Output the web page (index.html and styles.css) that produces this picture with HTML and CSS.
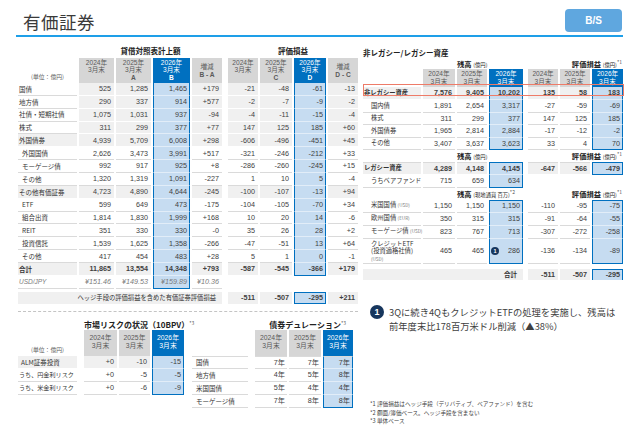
FILE: index.html
```html
<!DOCTYPE html>
<html lang="ja">
<head>
<meta charset="utf-8">
<title>有価証券</title>
<link rel="stylesheet" href="styles.css">
</head>
<body>
<div class="header">
  <div class="title">有価証券</div>
  <div class="badge">B/S</div>
</div>
<div class="body">
  <div class="left">
    <table class="tbl main">
      <colgroup>
        <col style="width:59px"><col style="width:35px"><col style="width:35px"><col style="width:37px"><col style="width:30px">
        <col style="width:2px">
        <col style="width:30px"><col style="width:32px"><col style="width:32px"><col style="width:30px">
      </colgroup>
      <tr class="ttl"><th></th><th colspan="4">貸借対照表計上額</th><th></th><th colspan="4">評価損益</th></tr>
      <tr class="hd">
        <th class="unit">(単位：億円)</th>
        <th class="g">2024年<br>3月末</th>
        <th class="g">2025年<br>3月末<br><b>A</b></th>
        <th class="b">2026年<br>3月末<br><b>B</b></th>
        <th class="g mid">増減<br><b>B - A</b></th>
        <th></th>
        <th class="g">2024年<br>3月末</th>
        <th class="g">2025年<br>3月末<br><b>C</b></th>
        <th class="b">2026年<br>3月末<br><b>D</b></th>
        <th class="g mid">増減<br><b>D - C</b></th>
      </tr>
      <tr class="r sh"><td class="lb">国債</td><td>525</td><td>1,285</td><td class="hl">1,465</td><td>+179</td><td class="sp"></td><td>-21</td><td>-48</td><td class="hl">-61</td><td>-13</td></tr>
      <tr class="r sh"><td class="lb">地方債</td><td>290</td><td>337</td><td class="hl">914</td><td>+577</td><td class="sp"></td><td>-2</td><td>-7</td><td class="hl">-9</td><td>-2</td></tr>
      <tr class="r sh"><td class="lb">社債・短期社債</td><td>1,075</td><td>1,031</td><td class="hl">937</td><td>-94</td><td class="sp"></td><td>-4</td><td>-11</td><td class="hl">-15</td><td>-4</td></tr>
      <tr class="r sh"><td class="lb">株式</td><td>311</td><td>299</td><td class="hl">377</td><td>+77</td><td class="sp"></td><td>147</td><td>125</td><td class="hl">185</td><td>+60</td></tr>
      <tr class="r sh"><td class="lb shl">外国債券</td><td>4,939</td><td>5,709</td><td class="hl">6,008</td><td>+298</td><td class="sp"></td><td>-606</td><td>-496</td><td class="hl">-451</td><td>+45</td></tr>
      <tr class="r"><td class="lb sub">外国国債</td><td>2,626</td><td>3,473</td><td class="hl">3,991</td><td>+517</td><td class="sp"></td><td>-321</td><td>-246</td><td class="hl">-212</td><td>+33</td></tr>
      <tr class="r"><td class="lb sub">モーゲージ債</td><td>992</td><td>917</td><td class="hl">925</td><td>+8</td><td class="sp"></td><td>-286</td><td>-260</td><td class="hl">-245</td><td>+15</td></tr>
      <tr class="r"><td class="lb sub">その他</td><td>1,320</td><td>1,319</td><td class="hl">1,091</td><td>-227</td><td class="sp"></td><td>1</td><td>10</td><td class="hl">5</td><td>-4</td></tr>
      <tr class="r sh"><td class="lb shl">その他有価証券</td><td>4,723</td><td>4,890</td><td class="hl">4,644</td><td>-245</td><td class="sp"></td><td>-100</td><td>-107</td><td class="hl">-13</td><td>+94</td></tr>
      <tr class="r"><td class="lb sub">ETF</td><td>599</td><td>649</td><td class="hl">473</td><td>-175</td><td class="sp"></td><td>-104</td><td>-105</td><td class="hl">-70</td><td>+34</td></tr>
      <tr class="r"><td class="lb sub">組合出資</td><td>1,814</td><td>1,830</td><td class="hl">1,999</td><td>+168</td><td class="sp"></td><td>10</td><td>20</td><td class="hl">14</td><td>-6</td></tr>
      <tr class="r"><td class="lb sub">REIT</td><td>351</td><td>330</td><td class="hl">330</td><td>-0</td><td class="sp"></td><td>35</td><td>26</td><td class="hl">28</td><td>+2</td></tr>
      <tr class="r"><td class="lb sub">投資信託</td><td>1,539</td><td>1,625</td><td class="hl">1,358</td><td>-266</td><td class="sp"></td><td>-47</td><td>-51</td><td class="hl">13</td><td>+64</td></tr>
      <tr class="r"><td class="lb sub">その他</td><td>417</td><td>454</td><td class="hl">483</td><td>+28</td><td class="sp"></td><td>5</td><td>1</td><td class="hl">0</td><td>-1</td></tr>
      <tr class="r sh bold"><td class="lb shl">合計</td><td>11,865</td><td>13,554</td><td class="hl">14,348</td><td>+793</td><td class="sp"></td><td>-587</td><td>-545</td><td class="hl hl-end">-366</td><td>+179</td></tr>
      <tr class="r fx"><td class="lb">USD/JPY</td><td>¥151.46</td><td>¥149.53</td><td class="hl hl-end">¥159.89</td><td>¥10.36</td><td class="sp"></td><td class="none"></td><td class="none"></td><td class="none"></td><td class="none"></td></tr>
      <tr class="gap"><td colspan="10" class="sp"></td></tr>
      <tr class="hedge"><td colspan="5" class="hlabel">ヘッジ手段の評価損益を含めた有価証券評価損益</td><td class="sp"></td><td>-511</td><td>-507</td><td class="hlbox">-295</td><td>+211</td></tr>
    </table>

    <div class="dash"></div>

    <div class="bottom">
      <table class="tbl mkt">
        <colgroup><col style="width:59px"><col style="width:3px"><col style="width:33px"><col style="width:31px"><col style="width:32px"></colgroup>
        <tr class="ttl2"><th></th><th></th><th colspan="3" class="tl">市場リスクの状況（10BPV）<sup>*3</sup></th></tr>
        <tr class="hd3">
          <th class="unit">(単位：億円)</th><th></th>
          <th class="g">2024年<br>3月末</th><th class="g">2025年<br>3月末</th><th class="b">2026年<br>3月末</th>
        </tr>
        <tr class="r3 sh"><td class="lb shl pl">ALM証券投資</td><td class="sp"></td><td>+0</td><td>-10</td><td class="hl">-15</td></tr>
        <tr class="r3"><td class="lb sm">うち、円金利リスク</td><td class="sp"></td><td>+0</td><td>-5</td><td class="hl">-5</td></tr>
        <tr class="r3"><td class="lb sm">うち、米金利リスク</td><td class="sp"></td><td>+0</td><td>-6</td><td class="hl hl-end">-9</td></tr>
      </table>

      <table class="tbl dur">
        <colgroup><col style="width:56px"><col style="width:3px"><col style="width:32px"><col style="width:32px"><col style="width:30px"></colgroup>
        <tr class="ttl2"><th></th><th></th><th colspan="3" class="tr">債券デュレーション<sup>*3</sup></th></tr>
        <tr class="hd3">
          <th></th><th></th>
          <th class="g">2024年<br>3月末</th><th class="g">2025年<br>3月末</th><th class="b">2026年<br>3月末</th>
        </tr>
        <tr class="r3 first"><td class="lb pd">国債</td><td class="sp"></td><td>7年</td><td>7年</td><td class="hl">7年</td></tr>
        <tr class="r3"><td class="lb pd">地方債</td><td class="sp"></td><td>4年</td><td>5年</td><td class="hl">8年</td></tr>
        <tr class="r3"><td class="lb pd">米国国債</td><td class="sp"></td><td>5年</td><td>4年</td><td class="hl">4年</td></tr>
        <tr class="r3"><td class="lb pd">モーゲージ債</td><td class="sp"></td><td>7年</td><td>8年</td><td class="hl hl-end">8年</td></tr>
      </table>
    </div>
  </div>

  <div class="right">
    <div class="rtitle">非レガシー/レガシー資産</div>
    <div class="rwrap">
      <table class="tbl rt">
        <colgroup><col style="width:58px"><col style="width:32px"><col style="width:30px"><col style="width:34px"><col style="width:1px"><col style="width:30px"><col style="width:30px"><col style="width:31px"></colgroup>
        <tr class="h1"><th></th><th colspan="3" class="zan">残高 <small>(億円)</small></th><th></th><th colspan="3" class="hyo">評価損益 <small>(億円)</small><sup>*1</sup></th></tr>
        <tr class="hd2">
          <th></th><th class="g">2024年<br>3月末</th><th class="g">2025年<br>3月末</th><th class="b">2026年<br>3月末</th><th></th>
          <th class="g">2024年<br>3月末</th><th class="g">2025年<br>3月末</th><th class="b">2026年<br>3月末</th>
        </tr>
        <tr class="rr1 sh bold"><td class="lb shl">非レガシー資産</td><td>7,576</td><td>9,405</td><td class="hl">10,202</td><td class="sp"></td><td>135</td><td>58</td><td class="hl">183</td></tr>
        <tr class="rr"><td class="lb sub2">国内債</td><td>1,891</td><td>2,654</td><td class="hl">3,317</td><td class="sp"></td><td>-27</td><td>-59</td><td class="hl">-69</td></tr>
        <tr class="rr"><td class="lb sub2">株式</td><td>311</td><td>299</td><td class="hl">377</td><td class="sp"></td><td>147</td><td>125</td><td class="hl">185</td></tr>
        <tr class="rr"><td class="lb sub2">外国債券</td><td>1,965</td><td>2,814</td><td class="hl">2,884</td><td class="sp"></td><td>-17</td><td>-12</td><td class="hl">-2</td></tr>
        <tr class="rr"><td class="lb sub2">その他</td><td>3,407</td><td>3,637</td><td class="hl hl-end">3,623</td><td class="sp"></td><td>33</td><td>4</td><td class="hl hl-end">70</td></tr>
        <tr class="h1b"><th></th><th colspan="3" class="zan">残高 <small>(億円)</small></th><th></th><th colspan="3" class="hyo">評価損益 <small>(億円)</small><sup>*1</sup></th></tr>
        <tr class="rr1 sh bold topl"><td class="lb shl">レガシー資産</td><td>4,289</td><td>4,148</td><td class="hl hl-top">4,145</td><td class="sp"></td><td>-647</td><td>-566</td><td class="hl hl-top hl-end">-479</td></tr>
        <tr class="rr"><td class="lb sub2 sm">うちベアファンド</td><td>715</td><td>659</td><td class="hl hl-end">634</td><td class="sp"></td><td class="none"></td><td class="none"></td><td class="none"></td></tr>
        <tr class="h1b"><th></th><th colspan="3" class="zan">残高 <small>(現地通貨 百万)</small><sup>*2</sup></th><th></th><th colspan="3" class="hyo">評価損益 <small>(億円)</small><sup>*1</sup></th></tr>
        <tr class="rr1"><td class="lb sub2">米国国債 <span class="cur">(USD)</span></td><td>1,150</td><td>1,150</td><td class="hl hl-top">1,150</td><td class="sp"></td><td>-110</td><td>-95</td><td class="hl hl-top">-75</td></tr>
        <tr class="rr1"><td class="lb sub2">欧州国債 <span class="cur">(EUR)</span></td><td>350</td><td>315</td><td class="hl">315</td><td class="sp"></td><td>-91</td><td>-64</td><td class="hl">-55</td></tr>
        <tr class="rr1"><td class="lb sub2">モーゲージ債 <span class="cur">(USD)</span></td><td>823</td><td>767</td><td class="hl">713</td><td class="sp"></td><td>-307</td><td>-272</td><td class="hl">-258</td></tr>
        <tr class="rr2"><td class="lb sub2 etf">クレジットETF<br>(投資適格社債)<br><span class="cur">(USD)</span></td><td>465</td><td>465</td><td class="hl hl-end"><div class="cellflex"><span class="dot">1</span><span>286</span></div></td><td class="sp"></td><td>-136</td><td>-134</td><td class="hl hl-end">-89</td></tr>
        <tr class="gap2"><td colspan="8" class="sp"></td></tr>
        <tr class="tot bold"><td colspan="4" class="totlabel">合計</td><td class="sp"></td><td>-511</td><td>-507</td><td class="hlbox">-295</td></tr>
      </table>
      <div class="obox"></div>
    </div>

    <div class="note">
      <span class="circle">1</span>
      <p>3Qに続き4QもクレジットETFの処理を実施し、残高は<br>前年度末比178百万米ドル削減（▲38%）</p>
    </div>

    <div class="foot">
      <p>*1 評価損益はヘッジ手段（デリバティブ、ベアファンド）を含む</p>
      <p>*2 額面/簿価ベース。ヘッジ手段を含まない</p>
      <p>*3 単体ベース</p>
    </div>
  </div>
</div>
</body>
</html>
```

FILE: styles.css
```css
* { box-sizing: border-box; }
html, body { margin: 0; padding: 0; }
body {
  width: 640px;
  height: 443px;
  overflow: hidden;
  background: #fff;
  font-family: "Liberation Sans", "Noto Sans CJK JP", sans-serif;
  color: #333;
}

/* header */
.header {
  margin-left: 16px;
  width: 607px;
  height: 37px;
  border-bottom: 2px solid #1e9fe8;
  display: flex;
  justify-content: space-between;
  align-items: flex-start;
  padding: 11px 1px 0 7px;
}
.title {
  font-family: "Noto Sans CJK JP", sans-serif;
  font-size: 17.5px;
  line-height: 22px;
  color: #3a3a3a;
  letter-spacing: 0.5px;
}
.badge {
  margin-top: -2px;
  width: 57px;
  height: 23px;
  border-radius: 4px;
  background: #5fa7df;
  color: #fff;
  font-weight: 700;
  font-size: 10px;
  line-height: 23px;
  text-align: center;
}

.body { display: flex; padding-left: 16px; }
.left { width: 344px; flex: none; }
.right { width: 265px; margin-left: 1px; flex: none; }

/* tables generic */
.tbl {
  border-collapse: separate;
  border-spacing: 2px 0;
  table-layout: fixed;
}
.tbl td, .tbl th {
  padding: 0;
  white-space: nowrap;
  overflow: visible;
  font-weight: normal;
}
.tbl td {
  font-size: 7.2px;
  line-height: 1;
  color: #404040;
  text-align: right;
  padding-right: 3px;
  vertical-align: middle;
  border-bottom: 1px solid #dadada;
}
.tbl td.lb {
  text-align: left;
  font-family: "Noto Sans CJK JP", sans-serif;
  font-size: 6.5px;
  color: #333;
  padding-left: 1px;
  padding-right: 0;
}
.tbl td.sub { padding-left: 4px; }
.tbl td.sub2 { padding-left: 8px; }
.tbl td.pl { padding-left: 3px; }
.tbl td.pd { padding-left: 4px; }
.tbl td.sm { font-size: 6.1px; }
.tbl td.sp { border: none; padding: 0; background: none; }
.tbl td.none { border: none; background: none; }

.tbl tr.sh td { background: #f0f0f0; border-bottom-color: #fff; }
.tbl tr.sh td.lb { background: #fff; border-bottom-color: #dadada; }
.tbl tr.sh td.lb.shl { background: #f0f0f0; border-bottom-color: #fff; }
.tbl tr.sh td.sp { background: none; }

.tbl tr td.hl, .tbl tr.sh td.hl {
  background: #c6dcf1;
  border-left: 1.5px solid #0070c0;
  border-right: 1.5px solid #0070c0;
  border-bottom: 1px solid #e2edf8;
  padding-right: 2px;
}
.tbl tr td.hl.hl-end, .tbl tr.sh td.hl.hl-end { border-bottom: 1.5px solid #0070c0; }
.tbl tr td.hl.hl-top, .tbl tr.sh td.hl.hl-top { border-top: 1.5px solid #0070c0; }

.tbl tr.bold td { font-weight: 700; }

/* header cells */
.tbl th.g, .tbl th.b {
  font-size: 6.6px;
  line-height: 7.4px;
  text-align: center;
  vertical-align: top;
  padding-top: 1px;
}
.tbl th.g { background: #d6d6d6; color: #595959; }
.tbl th.b {
  background: #0070c0;
  color: #fff;
  border-left: 1.5px solid #0070c0;
  border-right: 1.5px solid #0070c0;
}
.tbl th.mid { vertical-align: middle; padding-top: 0; }
.tbl th b { font-weight: 700; }
.tbl th.unit {
  font-family: "Noto Sans CJK JP", sans-serif;
  font-size: 5.8px;
  color: #595959;
  vertical-align: bottom;
  text-align: center;
  padding-bottom: 2px;
}

/* main table */
.main { width: 344px; margin-top: 6px; }
.main tr.ttl { height: 15px; }
.main tr.ttl th {
  font-family: "Noto Sans CJK JP", sans-serif;
  font-size: 7.5px;
  font-weight: 700;
  color: #222;
  text-align: center;
  vertical-align: middle;
}
.main tr.hd { height: 25px; }
.main tr.r { height: 12.86px; }
.main tr.fx td { font-style: italic; color: #7a7a7a; }
.main tr.fx td.lb { font-family: "Liberation Sans", sans-serif; font-size: 6.5px; color: #7a7a7a; padding-left: 1px; }
.main tr.gap { height: 3.2px; }
.main tr.gap td { border: none; }
.main tr.hedge { height: 12px; }
.main tr.hedge td {
  background: #f0f0f0;
  border-bottom: none;
  font-weight: 700;
}
.main tr.hedge td.sp { background: none; }
.main tr.hedge td.hlabel {
  font-family: "Noto Sans CJK JP", sans-serif;
  font-weight: 400;
  font-size: 6.3px;
  color: #333;
  text-align: right;
  padding-right: 6px;
}
.tbl td.hlbox {
  background: #c6dcf1;
  border: 1.5px solid #0070c0;
  padding-right: 2px;
}
.main tr.hedge td.hlbox { background: #c6dcf1; border-bottom: 1.5px solid #0070c0; }

.dash {
  margin: 7px 2px 0 2px;
  border-top: 1px dashed #c4c4c4;
}

/* bottom tables */
.bottom { display: flex; align-items: flex-start; }
.mkt { width: 170px; }
.dur { width: 165px; margin-left: 4px; }
.tbl tr.ttl2 { height: 18px; }
.tbl tr.ttl2 th {
  font-family: "Noto Sans CJK JP", sans-serif;
  font-size: 8px;
  font-weight: 700;
  color: #222;
  vertical-align: bottom;
  padding-bottom: 1px;
  line-height: 9px;
}
.tbl th.tl { text-align: left; padding-left: 0; }
.tbl th.tr { text-align: right; padding-right: 7px; }
.tbl tr.ttl2 sup, .rt sup { font-size: 5px; font-weight: 400; vertical-align: 3px; color: #555; }
.tbl tr.hd3 { height: 26px; }
.tbl tr.hd3 th.g, .tbl tr.hd3 th.b { vertical-align: top; padding-top: 4px; font-size: 6.8px; line-height: 8px; }
.tbl tr.r3 { height: 13px; }
.dur tr.first td { border-top: 1px solid #dadada; }
.dur tr.first td.sp { border-top: none; }
.dur td { padding-right: 2px; }

/* right side */
.rtitle {
  margin-top: 11px;
  height: 10px;
  line-height: 10px;
  padding-left: 2px;
  font-family: "Noto Sans CJK JP", sans-serif;
  font-size: 7.5px;
  font-weight: 700;
  color: #222;
}
.rwrap { position: relative; }
.rt { width: 264px; }
.rt tr.h1 { height: 7px; }
.rt tr.h1b { height: 12px; }
.rt tr.h1 th, .rt tr.h1b th {
  font-family: "Noto Sans CJK JP", sans-serif;
  font-size: 7.3px;
  font-weight: 700;
  color: #222;
  vertical-align: bottom;
  line-height: 8px;
  padding-bottom: 0;
}
.rt tr.h1b th { padding-bottom: 1px; }
.rt th small { font-size: 5.3px; font-weight: 400; }
.rt th.zan { text-align: left; padding-left: 34px; }
.rt th.hyo { text-align: right; padding-right: 1px; }
.rt tr.hd2 { height: 18px; }
.rt tr.hd2 th.g, .rt tr.hd2 th.b { vertical-align: middle; padding-top: 0; line-height: 7.6px; }
.rt tr.rr1 { height: 13px; }
.rt tr.rr { height: 12.5px; }
.rt tr.rr2 { height: 24px; }
.rt tr.gap2 { height: 5px; }
.rt tr.gap2 td { border: none; }
.rt tr.tot { height: 11px; }
.rt tr.tot td { background: #f0f0f0; border-bottom: none; }
.rt tr.tot td.sp { background: none; }
.rt tr.tot td.hlbox { background: #c6dcf1; }
.rt td.totlabel {
  font-family: "Noto Sans CJK JP", sans-serif;
  font-size: 6.5px;
  text-align: right;
  padding-right: 6px;
  color: #333;
}
.rt tr.topl td { border-top: 1px solid #dadada; }
.rt tr.topl td.sp { border-top: none; }
.rt td.lb { font-size: 6.3px; }
.rt td.lb.shl { padding-left: 1px; }
.rt .cur { font-size: 4.6px; color: #777; }
.rt td.etf { line-height: 7.5px; padding-top: 1px; }
.cellflex { display: flex; justify-content: space-between; align-items: center; padding-left: 1px; }
.dot {
  width: 8px;
  height: 8px;
  border-radius: 50%;
  background: #17365d;
  color: #fff;
  font-size: 5.5px;
  font-weight: 700;
  line-height: 8px;
  text-align: center;
  font-family: "Liberation Sans", sans-serif;
}

.obox {
  position: absolute;
  left: 2px;
  top: 25.5px;
  width: 261px;
  height: 12.5px;
  border: 1.5px solid #ee7b68;
  pointer-events: none;
}

.note {
  margin-top: 25px;
  display: flex;
  align-items: flex-start;
  padding-left: 9px;
}
.circle {
  flex: none;
  width: 14px;
  height: 14px;
  border-radius: 50%;
  background: #17365d;
  color: #fff;
  font-size: 9px;
  font-weight: 700;
  line-height: 14px;
  text-align: center;
}
.note p {
  margin: 0 0 0 5px;
  font-family: "Noto Sans CJK JP", sans-serif;
  font-size: 9.3px;
  line-height: 14px;
  color: #404040;
}

.foot {
  margin-top: 67px;
  padding-left: 9px;
}
.foot p {
  margin: 0;
  font-family: "Noto Sans CJK JP", sans-serif;
  font-size: 5.6px;
  line-height: 8.5px;
  color: #404040;
  white-space: nowrap;
}
```
